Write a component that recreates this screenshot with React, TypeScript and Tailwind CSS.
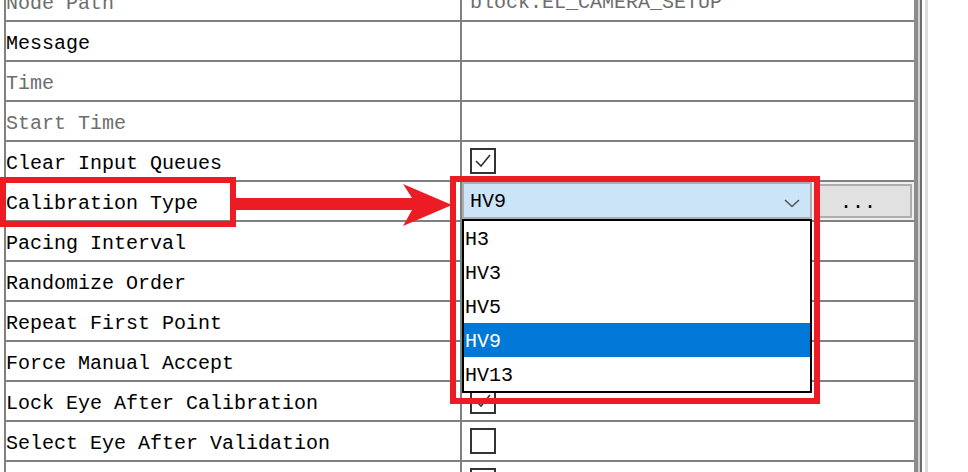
import { ReactNode } from 'react';

type Row = {
  id: string;
  label: string;
  muted?: boolean;
  value?: ReactNode;
};

const Checkbox = ({ checked }: { checked?: boolean }) => (
  <div className="flex h-[26px] w-[26px] items-center justify-center border-2 border-[#333333] bg-white">
    {checked && (
      <svg width="22" height="22" viewBox="0 0 22 22">
        <polyline points="4,11 9,16 18,5" fill="none" stroke="#333333" strokeWidth="1.6" />
      </svg>
    )}
  </div>
);

const CalibrationCombo = () => (
  <div className="flex h-full w-full items-start">
    <div className="flex h-[37px] w-[350px] items-center justify-between border-2 border-[#adadad] bg-[#cce4f7] pl-[6px] pr-[10px] text-black">
      <span className="pt-[3px]">HV9</span>
      <svg width="16" height="10" viewBox="0 0 16 10" className="mt-[4px]">
        <polyline points="1,2 8,8.5 15,2" fill="none" stroke="#555555" strokeWidth="1.6" />
      </svg>
    </div>
    <div className="h-[38px] flex-1 bg-[#f0f0f0] p-[2px]">
      <div className="flex h-full items-center justify-center border-2 border-[#adadad] bg-[#e1e1e1] pr-[10px] pt-[3px] text-black">
        ...
      </div>
    </div>
  </div>
);

const rows: Row[] = [
  { id: 'path', label: 'Node Path', muted: true, value: <span className="pt-[3px] text-[#6d6d6d]">block.EL_CAMERA_SETUP</span> },
  { id: 'msg', label: 'Message' },
  { id: 'time', label: 'Time', muted: true },
  { id: 'start', label: 'Start Time', muted: true },
  { id: 'clear', label: 'Clear Input Queues', value: <Checkbox checked /> },
  { id: 'calib', label: 'Calibration Type', value: <CalibrationCombo /> },
  { id: 'pacing', label: 'Pacing Interval' },
  { id: 'random', label: 'Randomize Order', value: <Checkbox checked /> },
  { id: 'repeat', label: 'Repeat First Point', value: <Checkbox checked /> },
  { id: 'force', label: 'Force Manual Accept', value: <Checkbox /> },
  { id: 'lock', label: 'Lock Eye After Calibration', value: <Checkbox checked /> },
  { id: 'select', label: 'Select Eye After Validation', value: <Checkbox /> },
  { id: 'next', label: '', value: <Checkbox /> },
];

const options = ['H3', 'HV3', 'HV5', 'HV9', 'HV13'];

export default function App() {
  return (
    <div
      className="relative h-[472px] w-[968px] overflow-hidden bg-white text-[20px] leading-none text-black"
      style={{ fontFamily: '"Liberation Mono", "DejaVu Sans Mono", monospace' }}
    >
      <div className="-mt-[18px] ml-[4px] flex">
        <div className="w-[910px] border-l-2 border-[#808080]">
          {rows.map((row) => (
            <div key={row.id} className="flex h-[40px] border-b-2 border-[#808080]">
              <div className={`flex w-[454px] items-center pt-[5px] ${row.muted ? 'text-[#6d6d6d]' : 'text-black'}`}>
                {row.label}
              </div>
              <div
                className={`flex flex-1 border-l-2 border-[#808080] ${
                  row.id === 'calib' ? '' : 'items-center pl-2'
                }`}
              >
                {row.value}
              </div>
            </div>
          ))}
        </div>
        <div className="w-[4px] bg-[#8c8c8c]" />
        <div className="w-[2px] bg-[#cfcfcf]" />
        <div className="w-[2px] bg-[#6e6e6e]" />
        <div className="w-[3px] bg-white" />
        <div className="w-[3px] bg-[#dcdcdc]" />
      </div>

      {/* open dropdown list */}
      <div className="absolute left-[462px] top-[219px] w-[350px] border-2 border-black bg-white">
        {options.map((opt) => (
          <div
            key={opt}
            className={`flex h-[34px] items-center pl-[1px] pt-[3px] ${
              opt === 'HV9' ? 'bg-[#0078d7] text-white' : 'text-black'
            }`}
          >
            {opt}
          </div>
        ))}
      </div>

      {/* annotation */}
      <div className="absolute left-0 top-[177px] h-[50px] w-[236px] border-[6px] border-[#ed1c24]" />
      <div className="absolute left-[450px] top-[176px] h-[228px] w-[370px] border-[6px] border-[#ed1c24]" />
      <svg className="absolute left-[236px] top-[180px]" width="220" height="50" viewBox="0 0 220 50">
        <polygon points="0,18 176,18 167,4 216,25 167,46 176,30 0,30" fill="#ed1c24" />
      </svg>
    </div>
  );
}
